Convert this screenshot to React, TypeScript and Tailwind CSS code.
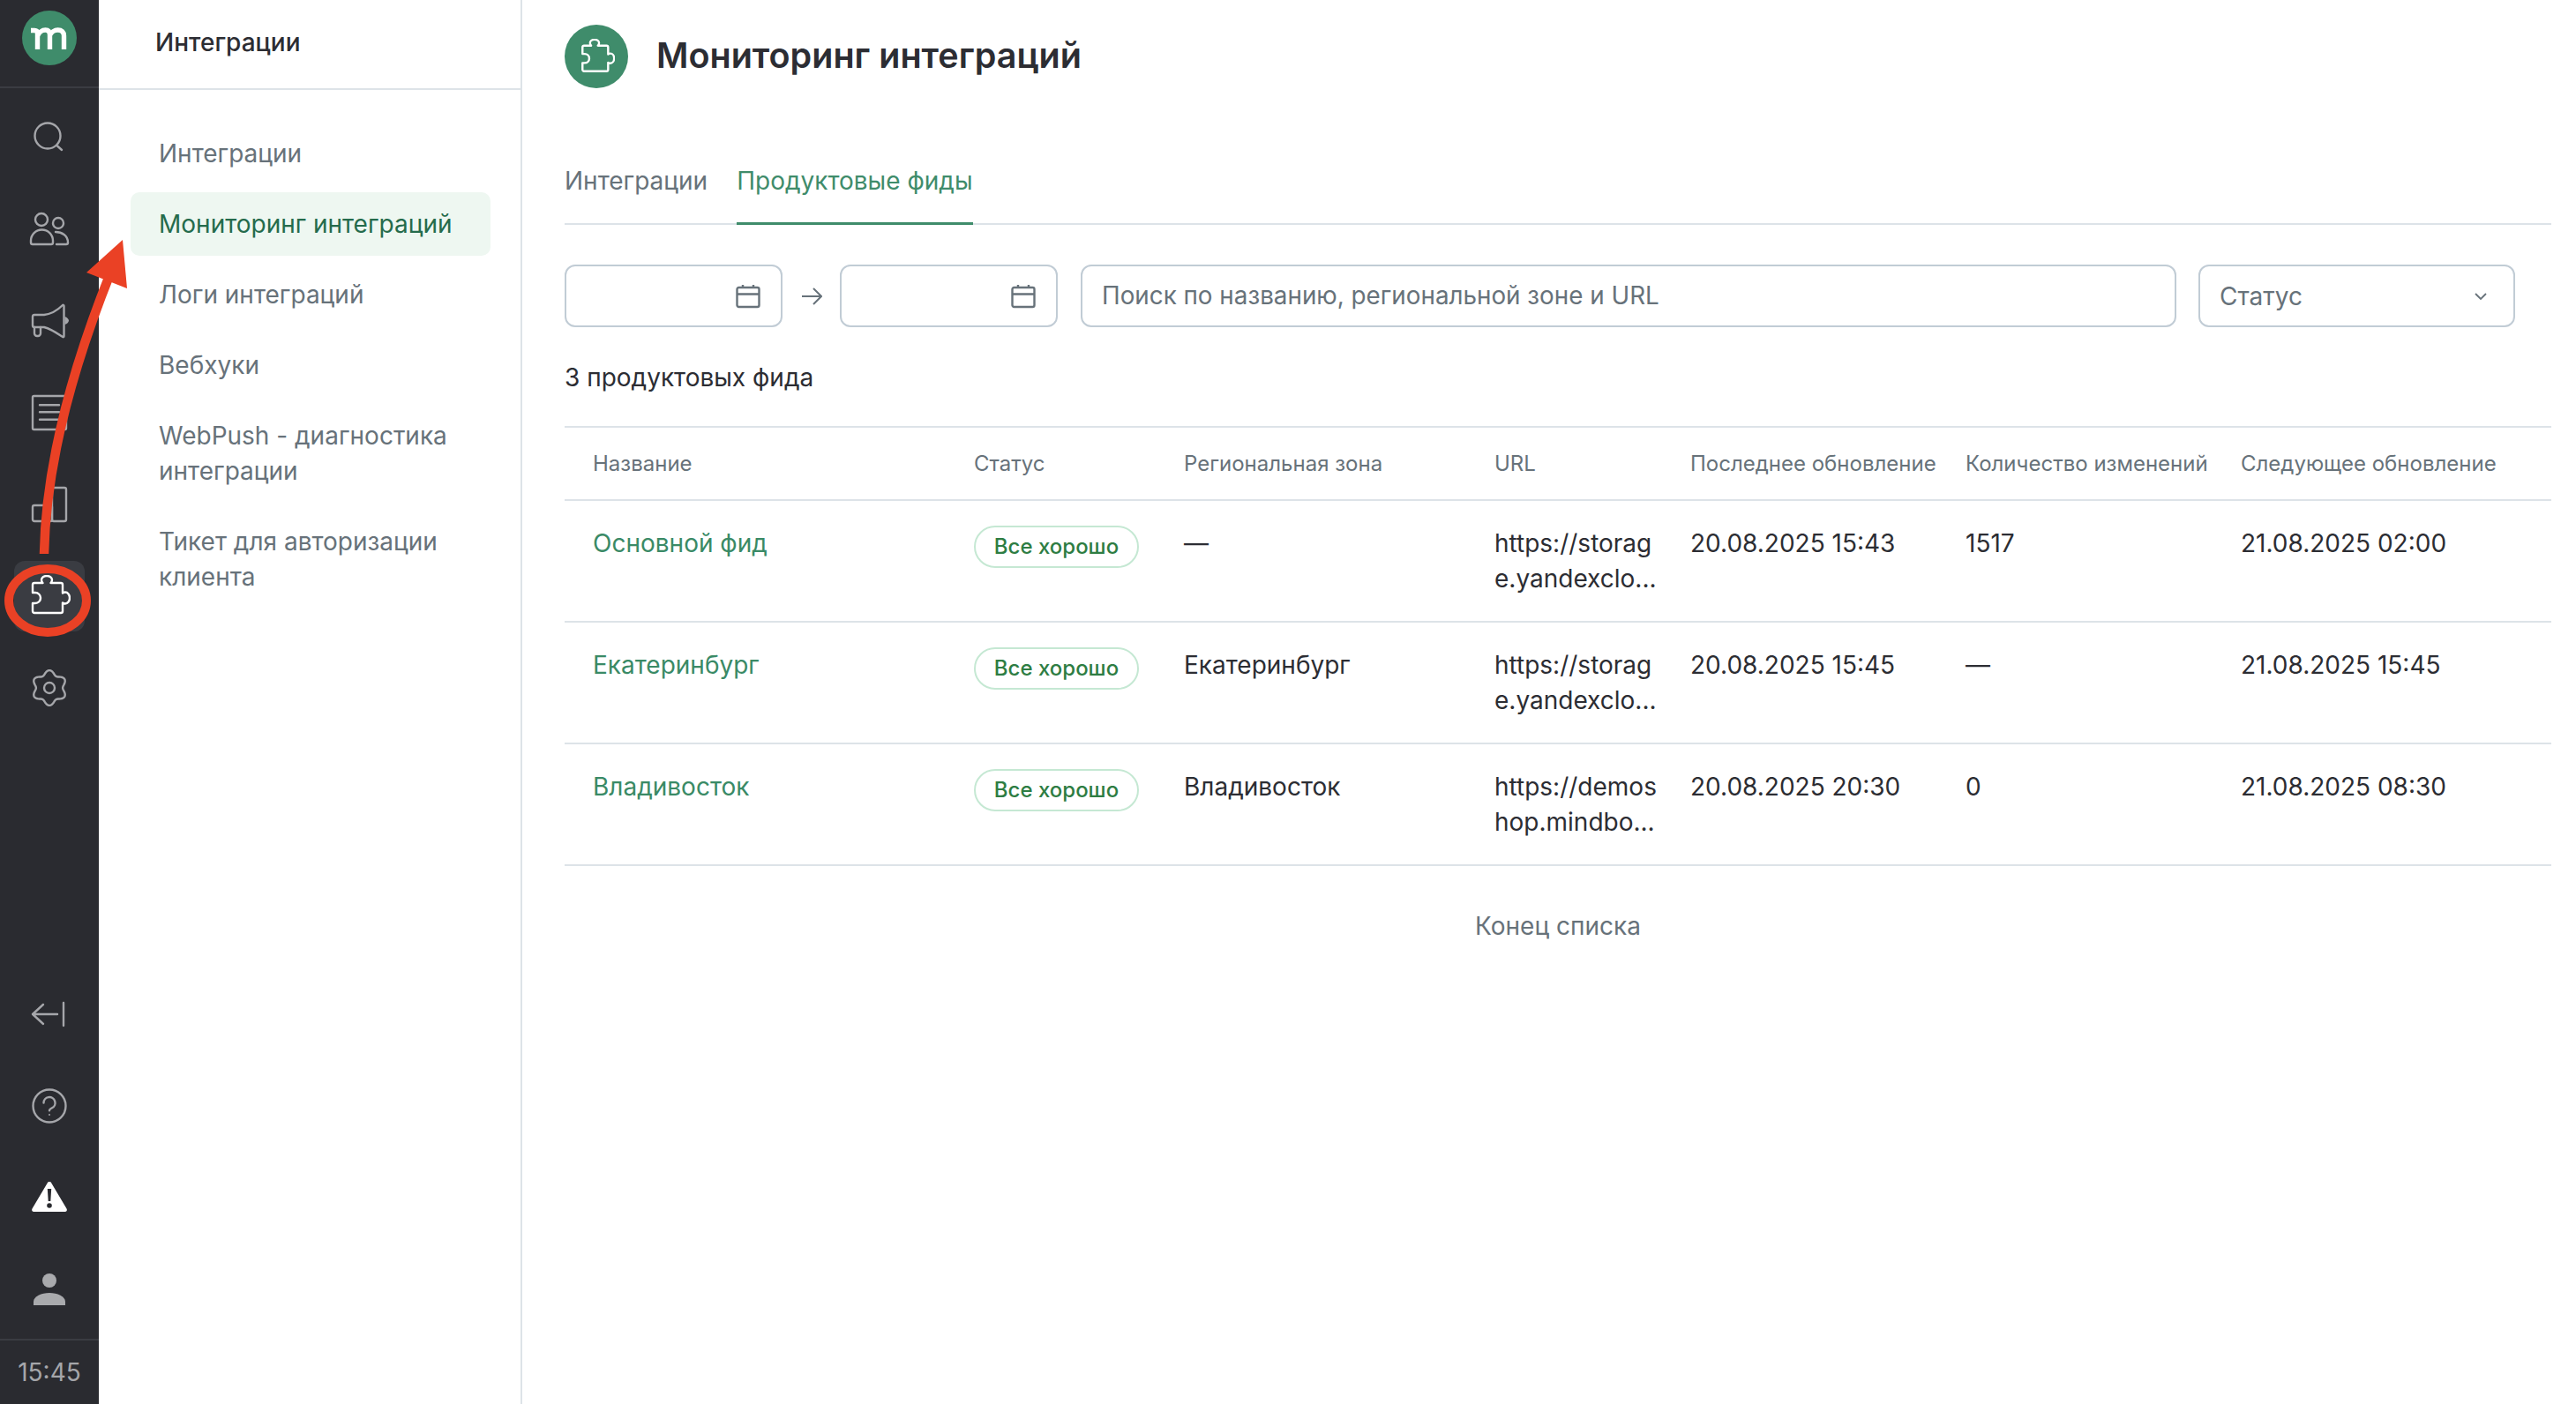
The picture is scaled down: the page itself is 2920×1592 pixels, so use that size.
import { ReactNode } from "react";

const navItems = [
  ["Интеграции"],
  ["Мониторинг интеграций"],
  ["Логи интеграций"],
  ["Вебхуки"],
  ["WebPush - диагностика", "интеграции"],
  ["Тикет для авторизации", "клиента"],
];

const feeds = [
  {
    name: "Основной фид",
    zone: "—",
    url: ["https://storag", "e.yandexclo..."],
    updated: "20.08.2025 15:43",
    changes: "1517",
    next: "21.08.2025 02:00",
  },
  {
    name: "Екатеринбург",
    zone: "Екатеринбург",
    url: ["https://storag", "e.yandexclo..."],
    updated: "20.08.2025 15:45",
    changes: "—",
    next: "21.08.2025 15:45",
  },
  {
    name: "Владивосток",
    zone: "Владивосток",
    url: ["https://demos", "hop.mindbo..."],
    updated: "20.08.2025 20:30",
    changes: "0",
    next: "21.08.2025 08:30",
  },
];

const columns =
  "grid grid-cols-[464px_238px_352px_222px_312px_312px_1fr] border-b-2 border-[#dde3e8]";

function gearPath() {
  const points: string[] = [];
  for (let deg = 0; deg < 360; deg += 4) {
    const rad = (deg * Math.PI) / 180;
    const r = 17.5 + 2.4 * Math.cos(6 * (rad - Math.PI / 2));
    points.push(`${(24 + r * Math.cos(rad)).toFixed(2)} ${(24 + r * Math.sin(rad)).toFixed(2)}`);
  }
  return `M${points.join("L")}Z`;
}

function Icon({ children, className = "" }: { children: ReactNode; className?: string }) {
  return (
    <svg
      viewBox="0 0 48 48"
      fill="none"
      stroke="currentColor"
      strokeWidth="2.4"
      strokeLinecap="round"
      strokeLinejoin="round"
      className={`h-[48px] w-[48px] ${className}`}
    >
      {children}
    </svg>
  );
}

const puzzle =
  "M7 9H16.5C15.5 8 15 6.5 15 5.5A6 4.5 0 0 1 27 5.5C27 6.5 26.5 8 25.5 9H37A2 2 0 0 1 39 11V20.5C40 19.8 41 19.5 42 19.5A5 6.5 0 0 1 42 32.5C41 32.5 40 32.2 39 31.5V41A2 2 0 0 1 37 43H7A2 2 0 0 1 5 41V32H8A6 6 0 0 0 8 20H5V11A2 2 0 0 1 7 9Z";

function Slot({ children, active }: { children: ReactNode; active?: boolean }) {
  return (
    <div className="flex h-[104px] items-center justify-center">
      <div
        className={`flex h-[80px] w-[80px] items-center justify-center rounded-[12px] ${
          active ? "bg-[#3a3c42] text-white" : "text-[#a5a6aa]"
        }`}
      >
        {children}
      </div>
    </div>
  );
}

function Sidebar() {
  return (
    <aside className="flex h-full w-[112px] shrink-0 flex-col bg-[#2a2b30]">
      <div className="flex h-[100px] shrink-0 items-start justify-center border-b-2 border-[#3a3c42] pt-[12px]">
        <svg viewBox="0 0 62 62" className="h-[62px] w-[62px]">
          <circle cx="31" cy="31" r="31" fill="#3f8c6b" />
          <path
            d="M10 22.500H14C16 22.500 17.500 23.500 17.500 26V44M17.500 29C19 24.500 23 22 26.500 22C30 22 31.500 24.500 31.500 28V44M31.500 28C33 24.500 37 22 40.500 22C45 22 47.500 24.500 47.500 28.500V44"
            fill="none"
            stroke="white"
            strokeWidth="5.400"
          />
        </svg>
      </div>
      <div className="pt-[4px]">
        <Slot>
          <Icon>
            <circle cx="22" cy="22" r="14.500" />
            <path d="M33 33.500L38 38" />
          </Icon>
        </Slot>
        <Slot>
          <Icon>
            <circle cx="15" cy="13" r="7" />
            <circle cx="34" cy="17" r="6" />
            <path d="M5 41H26A2 2 0 0 0 28 39V37A12.500 12.500 0 0 0 3 37V39A2 2 0 0 0 5 41Z" />
            <path d="M31 27C38 27 45 31 45 39A2 2 0 0 1 43 41H32" />
          </Icon>
        </Slot>
        <Slot>
          <Icon>
            <path d="M7 17C5.500 17 5 18 5 19V29C5 30 6 31 7 31H18C26 33 33 38 39 42C40 42.500 40.500 42 40.500 41V7C40.500 6 39.500 5.500 39 6C33 12 26 16 18 17Z" />
            <path d="M7 31V38A3 3 0 0 0 10 41H11A3 3 0 0 0 14 38V31" />
            <path d="M41.500 19C44 19.500 46 22 46 23.500C46 25 44 27.500 41.500 28Z" fill="currentColor" stroke="none" />
          </Icon>
        </Slot>
        <Slot>
          <Icon>
            <rect x="5" y="5" width="38" height="38" rx="1.500" />
            <path d="M13 15.300H35M13 23.300H35M13 31.700H35" />
          </Icon>
        </Slot>
        <Slot>
          <Icon>
            <rect x="5" y="25" width="22" height="18" rx="2" />
            <rect x="27" y="5" width="16" height="38" rx="2" />
          </Icon>
        </Slot>
        <Slot active>
          <Icon>
            <path d={puzzle} />
          </Icon>
        </Slot>
        <Slot>
          <Icon>
            <path d={gearPath()} />
            <circle cx="24" cy="24" r="6" />
          </Icon>
        </Slot>
      </div>
      <div className="mt-auto">
        <Slot>
          <Icon>
            <path d="M33 24H5M17 13L5 24L17 35M40 11V37" />
          </Icon>
        </Slot>
        <Slot>
          <Icon>
            <circle cx="24" cy="24" r="18.500" />
            <path d="M17.500 20.500A6.500 6.500 0 1 1 27 26.300C25.200 27.200 24 27.800 24 29.300" />
            <circle cx="24" cy="34" r="1" fill="currentColor" stroke="none" />
          </Icon>
        </Slot>
        <Slot>
          <svg viewBox="0 0 48 48" className="h-[48px] w-[48px]">
            <path
              d="M24 6C25 6 25.800 6.500 26.300 7.400L43.500 36.500C44.500 38.200 43.500 40 41.500 40H6.500C4.500 40 3.500 38.200 4.500 36.500L21.700 7.400C22.200 6.500 23 6 24 6Z"
              fill="white"
            />
            <path d="M21.800 14H26.200L25.300 28H22.700Z" fill="#2a2b30" />
            <circle cx="24" cy="33" r="2.800" fill="#2a2b30" />
          </svg>
        </Slot>
        <Slot>
          <svg viewBox="0 0 48 48" className="h-[48px] w-[48px]" fill="#a9aaad">
            <circle cx="24" cy="14" r="8" />
            <path d="M6 42V38C6 32 15 28 24 28C33 28 42 32 42 38V42Z" />
          </svg>
        </Slot>
      </div>
      <div className="mt-[4px] flex h-[74px] shrink-0 items-center justify-center border-t-2 border-[#3a3c42] text-[28px] text-[#a5a6aa]">
        15:45
      </div>
    </aside>
  );
}

function SubNav() {
  return (
    <nav className="h-full w-[480px] shrink-0 border-r-2 border-[#dde3e8]">
      <div className="flex h-[102px] items-center border-b-2 border-[#dde3e8] pb-[4px] pl-[64px] text-[28px] font-medium text-[#2c2d33]">
        Интеграции
      </div>
      <div className="ml-[36px] mt-[36px] flex w-[408px] flex-col gap-[8px]">
        {navItems.map((lines, i) => (
          <div
            key={lines[0]}
            className={`rounded-[10px] px-[32px] py-[16px] text-[28px] leading-[40px] ${
              i === 1 ? "bg-[#eef7f1] text-[#256b4c]" : "text-[#67727a]"
            }`}
          >
            {lines.map((line) => (
              <div key={line}>{line}</div>
            ))}
          </div>
        ))}
      </div>
    </nav>
  );
}

function DateField() {
  return (
    <div className="flex h-[71px] w-[247px] shrink-0 items-center justify-end rounded-[12px] border-2 border-[#c1ccd5] pr-[23px] text-[#67727a]">
      <svg viewBox="0 0 28 28" fill="none" stroke="currentColor" strokeWidth="2.400" className="h-[28px] w-[28px]">
        <rect x="1.500" y="4" width="25" height="22" rx="2" />
        <path d="M1.500 11.500H26.500M8 1V4M20 1V4" />
      </svg>
    </div>
  );
}

function StatusBadge() {
  return (
    <span className="inline-flex h-[48px] w-[187px] items-center justify-center rounded-full border-2 border-[#c5e8d3] text-[24px] font-medium text-[#2e7d43]">
      Все хорошо
    </span>
  );
}

export default function App() {
  return (
    <div className="relative flex h-screen w-full overflow-hidden bg-white font-['Inter','Noto_Sans',sans-serif] text-[#2c2d33]">
      <Sidebar />
      <SubNav />

      <main className="flex-1 pl-[48px] pr-[28px] pt-[28px]">
        <div className="flex h-[72px] items-center">
          <div className="flex h-[72px] w-[72px] items-center justify-center rounded-full bg-[#3f8c6b] text-white">
            <Icon className="!h-[41px] !w-[41px]">
              <path d={puzzle} strokeWidth="2.800" />
            </Icon>
          </div>
          <h1 className="ml-[32px] text-[39.5px] font-semibold">Мониторинг интеграций</h1>
        </div>

        <div className="mt-[85px] flex gap-[33px] border-b-2 border-[#dde3e8] text-[28px] leading-[40px]">
          <div className="pb-[28px] text-[#67727a]">Интеграции</div>
          <div className="-mb-[2px] border-b-[3px] border-[#3f8c6b] pb-[27px] text-[#3f8c6b]">Продуктовые фиды</div>
        </div>

        <div className="mt-[45px] flex items-center pr-[41px]">
          <DateField />
          <div className="flex w-[65px] shrink-0 justify-center text-[#67727a]">
            <svg viewBox="0 0 24 24" fill="none" stroke="currentColor" strokeWidth="2" className="h-[24px] w-[24px]">
              <path d="M1 12H23M14 3L23 12L14 21" />
            </svg>
          </div>
          <DateField />
          <div className="ml-[26px] flex h-[71px] flex-1 items-center rounded-[12px] border-2 border-[#c1ccd5] pl-[22px] text-[27.800px] text-[#67727a]">
            Поиск по названию, региональной зоне и URL
          </div>
          <div className="ml-[25px] flex h-[71px] w-[359px] items-center justify-between rounded-[12px] border-2 border-[#c1ccd5] pl-[22px] pr-[30px] text-[28px] text-[#67727a]">
            Статус
            <svg viewBox="0 0 14 8" fill="none" stroke="currentColor" strokeWidth="1.800" className="h-[8px] w-[14px]">
              <path d="M1 1L7 7L13 1" />
            </svg>
          </div>
        </div>

        <div className="mt-[37px] text-[28px] leading-[40px]">3 продуктовых фида</div>

        <div className="mt-[35px] border-t-2 border-[#dde3e8]">
          <div className={`${columns} h-[83px] items-center text-[24px] text-[#67727a]`}>
            <div className="pl-[32px]">Название</div>
            <div>Статус</div>
            <div>Региональная зона</div>
            <div>URL</div>
            <div>Последнее обновление</div>
            <div>Количество изменений</div>
            <div>Следующее обновление</div>
          </div>
          {feeds.map((feed) => (
            <div key={feed.name} className={`${columns} h-[138px] pt-[28px] text-[28px] leading-[40px]`}>
              <div className="pl-[32px] text-[#3a8a66]">{feed.name}</div>
              <div>
                <StatusBadge />
              </div>
              <div>{feed.zone}</div>
              <div>
                {feed.url.map((line) => (
                  <div key={line}>{line}</div>
                ))}
              </div>
              <div>{feed.updated}</div>
              <div>{feed.changes}</div>
              <div>{feed.next}</div>
            </div>
          ))}
          <div className="mt-[48px] text-center text-[28px] leading-[40px] text-[#67727a]">Конец списка</div>
        </div>
      </main>

      {/* annotation over the screenshot */}
      <svg viewBox="0 0 200 750" fill="none" className="pointer-events-none absolute left-0 top-0 h-[750px] w-[200px]">
        <path d="M50 628C52 520 85 410 125 310" stroke="#ea4125" strokeWidth="10.500" />
        <path d="M139 272L98 309L144 327Z" fill="#ea4125" />
        <ellipse cx="54" cy="681" rx="44" ry="36" stroke="#ea4125" strokeWidth="10" />
      </svg>
    </div>
  );
}
